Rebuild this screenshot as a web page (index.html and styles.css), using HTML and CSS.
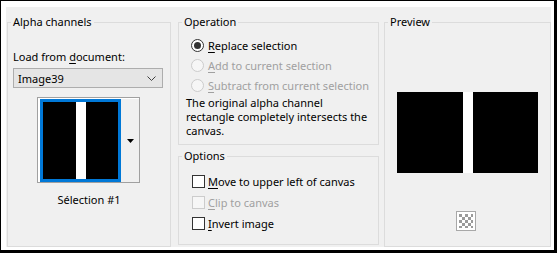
FILE: index.html
```html
<!DOCTYPE html>
<html>
<head>
<meta charset="utf-8">
<link rel="stylesheet" href="styles.css">
</head>
<body>
<div class="frame">
  <div class="dialog">
    <fieldset class="group alpha">
      <legend>Alpha channels</legend>
      <div class="label-load">Load from <u>d</u>ocument:</div>
      <div class="select">
        <span>Image39</span>
        <svg class="chev" width="9" height="5" viewBox="0 0 9 5"><polyline points="0.5,0.5 4.5,4.5 8.5,0.5" fill="none" stroke="#404040" stroke-width="1"/></svg>
      </div>
      <div class="thumb">
        <div class="tile">
          <div class="blk b1"></div><div class="wbar"></div><div class="blk b2"></div>
        </div>
        <div class="drop">
          <svg width="7" height="4" viewBox="0 0 7 4"><polygon points="0,0 7,0 3.5,4" fill="#000"/></svg>
        </div>
      </div>
      <div class="sel-name">Sélection #1</div>
    </fieldset>

    <div class="mid">
      <fieldset class="group operation">
        <legend>Operation</legend>
        <div class="row">
          <span class="radio checked"><span class="dot"></span></span>
          <span class="lbl"><u>R</u>eplace selection</span>
        </div>
        <div class="row disabled">
          <span class="radio"></span>
          <span class="lbl"><u>A</u>dd to current selection</span>
        </div>
        <div class="row disabled">
          <span class="radio"></span>
          <span class="lbl"><u>S</u>ubtract from current selection</span>
        </div>
        <p class="note">The original alpha channel<br>rectangle completely intersects the<br>canvas.</p>
      </fieldset>
      <fieldset class="group options">
        <legend>Options</legend>
        <div class="crow">
          <span class="check"></span>
          <span class="lbl"><u>M</u>ove to upper left of canvas</span>
        </div>
        <div class="crow disabled">
          <span class="check"></span>
          <span class="lbl"><u>C</u>lip to canvas</span>
        </div>
        <div class="crow">
          <span class="check"></span>
          <span class="lbl"><u>I</u>nvert image</span>
        </div>
      </fieldset>
    </div>

    <fieldset class="group preview">
      <legend>Preview</legend>
      <div class="pimg">
        <div class="pblk"></div><div class="pbar"></div><div class="pblk pb2"></div>
      </div>
      <svg class="checker" width="20" height="20" viewBox="0 0 20 20">
        <rect x="0.5" y="0.5" width="19" height="19" fill="#fff" stroke="#a8a8a8"/>
        <g fill="#9a9a9a">
          <rect x="3" y="3" width="3" height="3"/><rect x="9" y="3" width="3" height="3"/><rect x="15" y="3" width="2" height="3"/>
          <rect x="6" y="6" width="3" height="3"/><rect x="12" y="6" width="3" height="3"/>
          <rect x="3" y="9" width="3" height="3"/><rect x="9" y="9" width="3" height="3"/><rect x="15" y="9" width="2" height="3"/>
          <rect x="6" y="12" width="3" height="3"/><rect x="12" y="12" width="3" height="3"/>
          <rect x="3" y="15" width="3" height="2"/><rect x="9" y="15" width="3" height="2"/><rect x="15" y="15" width="2" height="2"/>
        </g>
      </svg>
    </fieldset>
  </div>
</div>
</body>
</html>
```

FILE: styles.css
```css
html, body {
  margin: 0;
  padding: 0;
  background: #fff;
}
body {
  font-family: "Noto Sans", "Open Sans", sans-serif;
  font-size: 11px;
  color: #000;
}
u {
  text-decoration: underline;
  text-underline-offset: 2px;
}
.frame {
  box-sizing: border-box;
  width: 557px;
  height: 253px;
  border: 1px solid #000;
  border-right-width: 3px;
  border-bottom-width: 3px;
  background: #fff;
  padding: 6px 3px 3px 5px;
}
.dialog {
  box-sizing: border-box;
  height: 100%;
  background: #f0f0f0;
  display: flex;
  align-items: flex-start;
  padding: 7px 0 0 1px;
}
.group {
  box-sizing: border-box;
  margin: 0;
  padding: 0;
  border: 1px solid #dcdcdc;
  min-width: 0;
}
.group legend {
  padding: 0 2px;
  margin-left: 3px;
  line-height: 16px;
}
.alpha {
  width: 164px;
  height: 233px;
}
.label-load {
  margin: 19px 0 0 5px;
  line-height: 16px;
}
.select {
  box-sizing: border-box;
  margin: 3px 0 0 5px;
  width: 150px;
  height: 20px;
  border: 1px solid #adadad;
  background: #e5e5e5;
  display: flex;
  align-items: center;
  justify-content: space-between;
  padding: 0 6px 0 4px;
}
.chev {
  display: block;
}
.thumb {
  box-sizing: border-box;
  margin: 9px 0 0 29px;
  width: 103px;
  height: 86px;
  border: 1px solid #a0a0a0;
  background: #fff;
  display: flex;
  padding: 1px 0 0 2px;
}
.tile {
  box-sizing: border-box;
  width: 81px;
  height: 83px;
  border: 3px solid #0078d7;
  display: flex;
}
.blk {
  background: #000;
}
.b1 { width: 33px; }
.b2 { flex: 1; }
.wbar {
  width: 10px;
  background: #fff;
}
.drop {
  flex: 1;
  height: 83px;
  background: #f0f0f0;
  display: flex;
  align-items: center;
  justify-content: center;
}
.drop svg { display: block; }
.sel-name {
  margin-top: 9px;
  text-align: center;
  line-height: 16px;
}
.mid {
  display: flex;
  flex-direction: column;
  margin-left: 7px;
  width: 201px;
}
.operation {
  width: 201px;
  height: 131px;
}
.options {
  width: 201px;
  height: 97px;
  margin-top: 3px;
}
.row {
  display: flex;
  align-items: center;
  height: 20px;
  margin-left: 12px;
}
.row:first-of-type {
  margin-top: 5px;
}
.radio {
  box-sizing: border-box;
  width: 13px;
  height: 13px;
  border-radius: 50%;
  border: 1px solid #333;
  background: #fff;
  display: flex;
  align-items: center;
  justify-content: center;
  margin-right: 4px;
  flex: none;
}
.radio .dot {
  width: 7px;
  height: 7px;
  border-radius: 50%;
  background: #333;
}
.disabled .radio,
.disabled .check {
  border-color: #cccccc;
  background: #f6f6f6;
}
.disabled .lbl {
  color: #a0a0a0;
}
.lbl {
  white-space: nowrap;
}
.note {
  margin: 1px 0 0 7px;
  line-height: 14px;
}
.crow {
  display: flex;
  align-items: center;
  height: 21px;
  margin-left: 13px;
}
.crow:first-of-type {
  margin-top: 7px;
}
.check {
  box-sizing: border-box;
  width: 13px;
  height: 13px;
  border: 1px solid #333;
  background: #fff;
  margin-right: 3px;
  flex: none;
}
.preview {
  width: 167px;
  height: 233px;
  margin-left: 5px;
}
.pimg {
  display: flex;
  margin: 62px 0 0 12px;
  width: 141px;
  height: 81px;
}
.pblk {
  width: 66px;
  background: #000;
}
.pb2 { width: 65px; }
.pbar {
  width: 10px;
  background: #fff;
}
.checker {
  display: block;
  margin: 38px 0 0 71px;
}
```
